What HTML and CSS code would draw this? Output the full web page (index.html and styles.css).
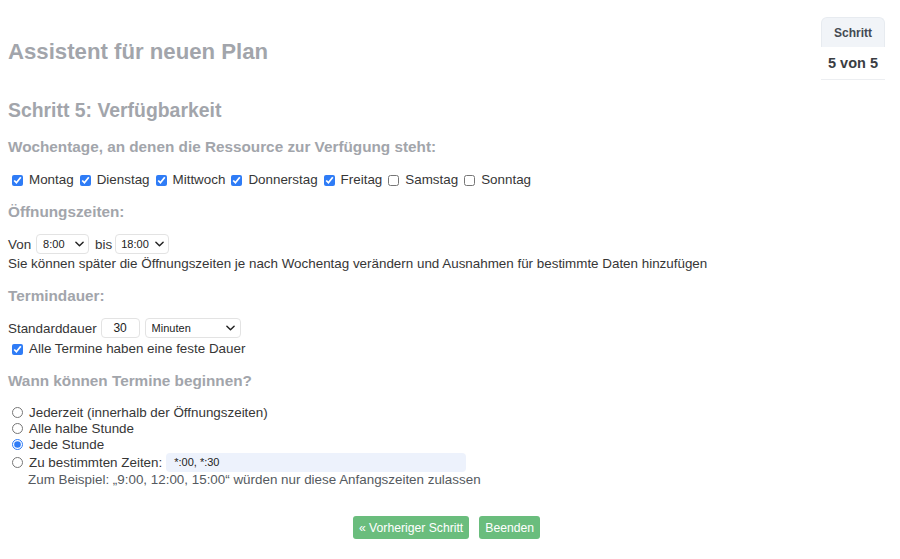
FILE: index.html
```html
<!DOCTYPE html>
<html lang="de">
<head>
<meta charset="utf-8">
<title>Assistent für neuen Plan</title>
<link rel="stylesheet" href="styles.css">
</head>
<body>
<div class="page">
  <div class="header">
    <h1 class="title">Assistent für neuen Plan</h1>
    <div class="step-card">
      <div class="step-head">Schritt</div>
      <div class="step-body">5 von 5</div>
    </div>
  </div>

  <h2 class="step-title">Schritt 5: Verfügbarkeit</h2>

  <h3 class="section first">Wochentage, an denen die Ressource zur Verfügung steht:</h3>
  <div class="days">
    <label class="check"><input type="checkbox" checked><span>Montag</span></label>
    <label class="check"><input type="checkbox" checked><span>Dienstag</span></label>
    <label class="check"><input type="checkbox" checked><span>Mittwoch</span></label>
    <label class="check"><input type="checkbox" checked><span>Donnerstag</span></label>
    <label class="check"><input type="checkbox" checked><span>Freitag</span></label>
    <label class="check"><input type="checkbox"><span>Samstag</span></label>
    <label class="check"><input type="checkbox"><span>Sonntag</span></label>
  </div>

  <h3 class="section">Öffnungszeiten:</h3>
  <div class="row hours">
    <span>Von</span>
    <span class="sel sel-from">
      <select><option>8:00</option></select>
      <svg class="chev" viewBox="0 0 10 6" width="9" height="6"><path d="M1 1l4 4 4-4" fill="none" stroke="#222" stroke-width="1.6" stroke-linecap="round" stroke-linejoin="round"/></svg>
    </span>
    <span>bis</span>
    <span class="sel sel-to">
      <select><option>18:00</option></select>
      <svg class="chev" viewBox="0 0 10 6" width="9" height="6"><path d="M1 1l4 4 4-4" fill="none" stroke="#222" stroke-width="1.6" stroke-linecap="round" stroke-linejoin="round"/></svg>
    </span>
  </div>
  <p class="note">Sie können später die Öffnungszeiten je nach Wochentag verändern und Ausnahmen für bestimmte Daten hinzufügen</p>

  <h3 class="section">Termindauer:</h3>
  <div class="row duration">
    <span>Standarddauer</span>
    <input class="num" type="text" value="30">
    <span class="sel sel-unit">
      <select><option>Minuten</option></select>
      <svg class="chev" viewBox="0 0 10 6" width="9" height="6"><path d="M1 1l4 4 4-4" fill="none" stroke="#222" stroke-width="1.6" stroke-linecap="round" stroke-linejoin="round"/></svg>
    </span>
  </div>
  <label class="check line"><input type="checkbox" checked><span>Alle Termine haben eine feste Dauer</span></label>

  <h3 class="section">Wann können Termine beginnen?</h3>
  <div class="radios">
    <label class="radio"><input type="radio" name="start"><span>Jederzeit (innerhalb der Öffnungszeiten)</span></label>
    <label class="radio"><input type="radio" name="start"><span>Alle halbe Stunde</span></label>
    <label class="radio"><input type="radio" name="start" checked><span>Jede Stunde</span></label>
    <label class="radio times"><input type="radio" name="start"><span>Zu bestimmten Zeiten:</span><input class="times-input" type="text" value="*:00, *:30"></label>
    <p class="example">Zum Beispiel: „9:00, 12:00, 15:00“ würden nur diese Anfangszeiten zulassen</p>
  </div>

  <div class="actions">
    <button class="btn btn-prev" type="button">« Vorheriger Schritt</button>
    <button class="btn" type="button">Beenden</button>
  </div>
</div>
</body>
</html>
```

FILE: styles.css
```css
html, body {
  margin: 0;
  padding: 0;
  background: #ffffff;
}

body {
  font-family: "Liberation Sans", Arial, Helvetica, sans-serif;
  font-size: 13.4px;
  color: #363636;
}

.page {
  padding: 0 15px 0 8px;
  display: flex;
  flex-direction: column;
}

.header {
  display: flex;
  justify-content: space-between;
  align-items: flex-start;
  height: 80px;
}

.title {
  margin: 39px 0 0 0;
  font-size: 22.2px;
  line-height: 26px;
  font-weight: bold;
  color: #a2a5ab;
}

.step-card {
  margin-top: 17px;
  width: 64px;
  text-align: center;
  font-weight: bold;
}

.step-head {
  height: 29px;
  line-height: 30px;
  background: #f1f4f8;
  border: 1px solid #e7ebf0;
  border-bottom: none;
  border-radius: 6px 6px 0 0;
  font-size: 12px;
  color: #444a52;
}

.step-body {
  height: 32px;
  line-height: 32px;
  font-size: 14.5px;
  color: #3a3d42;
  border-bottom: 1px solid #eceef1;
}

.step-title {
  margin: 18px 0 0 0;
  font-size: 19.4px;
  line-height: 24px;
  font-weight: bold;
  color: #a2a5ab;
}

.section {
  margin: 14px 0 0 0;
  font-size: 15.3px;
  line-height: 20px;
  font-weight: bold;
  color: #a2a5ab;
}

.section.first {
  margin-top: 15px;
}

.days {
  display: flex;
  gap: 2px;
  margin-top: 15px;
  height: 16px;
  align-items: center;
}

.check {
  display: inline-flex;
  align-items: center;
  gap: 6px;
  line-height: 16px;
}

.check input,
.radio input[type="radio"] {
  width: 11px;
  height: 11px;
  margin: 0 0 0 4px;
  accent-color: #2f7cf6;
}

.check.line {
  display: flex;
  margin-top: 2px;
}

.row {
  display: flex;
  align-items: center;
  height: 22px;
}

.hours {
  margin-top: 11px;
}

.hours .sel-from {
  margin: 0 6px 0 5px;
}

.hours .sel-to {
  margin-left: 3px;
}

.sel {
  position: relative;
  display: inline-block;
}

.sel select {
  appearance: none;
  -webkit-appearance: none;
  height: 20px;
  border: 1px solid #e3e3e3;
  border-radius: 4px;
  background: #ffffff;
  font-family: "Liberation Sans", Arial, sans-serif;
  font-size: 11px;
  color: #222;
  padding: 0 0 0 6px;
  display: block;
}

.sel .chev {
  position: absolute;
  top: 7px;
  right: 5px;
  pointer-events: none;
}

.sel-from select {
  width: 53px;
}

.sel-to select {
  width: 54px;
  padding-left: 5px;
}

.sel-unit select {
  width: 96px;
  padding-left: 6px;
}

.sel-unit .chev {
  right: 6px;
}

.note {
  margin: 1px 0 0 0;
  line-height: 16px;
}

.duration {
  margin-top: 11px;
}

.num {
  width: 39px;
  height: 20px;
  box-sizing: border-box;
  margin: 0 5px 0 4px;
  border: 1px solid #e3e3e3;
  border-radius: 4px;
  text-align: center;
  font-family: "Liberation Sans", Arial, sans-serif;
  font-size: 12px;
  color: #222;
  padding: 0;
}

.radios {
  margin-top: 13px;
  display: flex;
  flex-direction: column;
}

.radio {
  display: flex;
  align-items: center;
  gap: 6px;
  height: 16px;
}

.radio.times {
  height: 18px;
  margin-top: 1px;
}

.times-input {
  margin-left: -2px;
  width: 300px;
  height: 19px;
  box-sizing: border-box;
  border: none;
  border-radius: 4px;
  background: #edf2fc;
  font-family: "Liberation Sans", Arial, sans-serif;
  font-size: 11px;
  color: #222;
  padding: 0 0 0 8px;
}

.example {
  margin: 1px 0 0 20px;
  line-height: 16px;
  color: #555a60;
}

.actions {
  display: flex;
  justify-content: center;
  gap: 10px;
  margin-top: 28px;
}

.btn {
  height: 23px;
  padding: 0 6px;
  border: none;
  border-radius: 3px;
  background: #6abd7d;
  color: #ffffff;
  font-family: "Liberation Sans", Arial, sans-serif;
  font-size: 12.2px;
}
```
